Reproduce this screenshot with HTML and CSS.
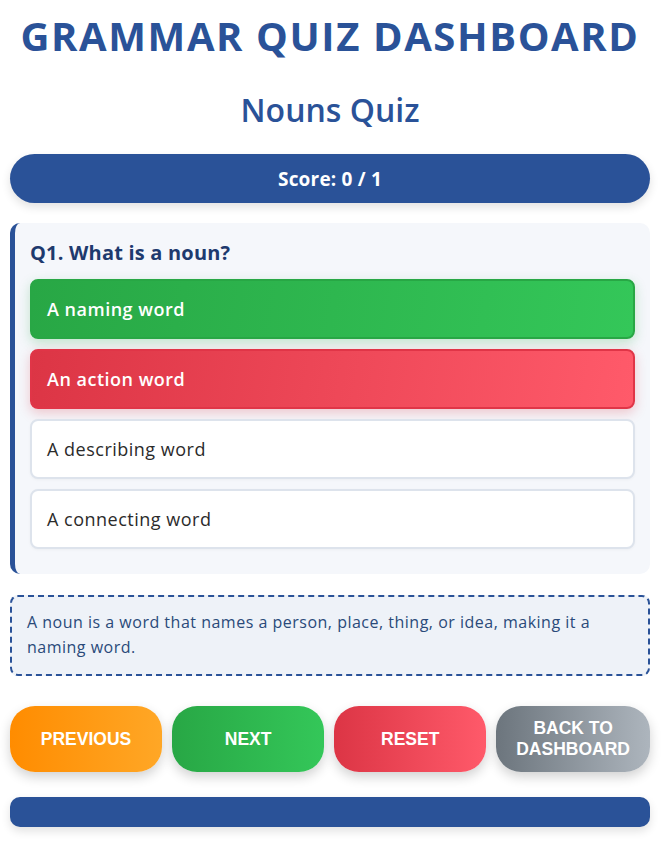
FILE: index.html
```html
<!DOCTYPE html>
<html lang="en">
<head>
<meta charset="utf-8">
<title>Grammar Quiz Dashboard</title>
<link rel="stylesheet" href="styles.css">
</head>
<body>
<div class="container">
  <h1 class="title">GRAMMAR QUIZ DASHBOARD</h1>
  <h2 class="quiz-name">Nouns Quiz</h2>
  <div class="score">Score: 0 / 1</div>
  <div class="question-card">
    <h3 class="question">Q1. What is a noun?</h3>
    <div class="option correct">A naming word</div>
    <div class="option wrong">An action word</div>
    <div class="option">A describing word</div>
    <div class="option">A connecting word</div>
  </div>
  <div class="explanation">A noun is a word that names a person, place, thing, or idea, making it a naming word.</div>
  <div class="nav">
    <button class="btn btn-prev">PREVIOUS</button>
    <button class="btn btn-next">NEXT</button>
    <button class="btn btn-reset">RESET</button>
    <button class="btn btn-back">BACK TO DASHBOARD</button>
  </div>
  <div class="footer-bar"></div>
</div>
</body>
</html>
```
FILE: styles.css
```css
* { box-sizing: border-box; }
body {
  margin: 0;
  background: #ffffff;
  font-family: "Open Sans", "Noto Sans", sans-serif;
}
.container {
  width: 640px;
  margin: 0 0 0 10px;
  padding: 12px 0 20px;
}
.title {
  margin: 0;
  text-align: center;
  font-size: 40px;
  line-height: 48px;
  font-weight: 700;
  letter-spacing: 1.6px;
  color: #2a5298;
}
.quiz-name {
  margin: 30px 0 24px;
  text-align: center;
  font-size: 32px;
  line-height: 40px;
  font-weight: 600;
  color: #2a5298;
}
.score {
  height: 49px;
  border-radius: 25px;
  background: #2a5298;
  color: #fff;
  font-weight: 700;
  font-size: 19px;
  letter-spacing: 0.2px;
  display: flex;
  align-items: center;
  justify-content: center;
  box-shadow: 0 4px 10px rgba(0, 0, 0, 0.12);
}
.question-card {
  margin-top: 20px;
  background: #f5f7fb;
  border-left: 5px solid #2a5298;
  border-radius: 10px;
  padding: 15px;
}
.question {
  margin: 0 0 11px;
  font-size: 20px;
  line-height: 30px;
  font-weight: 700;
  letter-spacing: 0.2px;
  color: #1e3a6e;
}
.option {
  height: 60px;
  margin-bottom: 10px;
  border: 2px solid #dde3ec;
  border-radius: 8px;
  background: #ffffff;
  padding: 0 15px;
  display: flex;
  align-items: center;
  font-size: 18px;
  letter-spacing: 0.5px;
  font-weight: 500;
  color: #2b2b2b;
  box-shadow: 0 1px 3px rgba(0, 0, 0, 0.04);
}
.option.correct {
  background: linear-gradient(100deg, #28a745, #34c759);
  border-color: #28a745;
  color: #fff;
  font-weight: 600;
  box-shadow: 0 4px 12px rgba(40, 167, 69, 0.25);
}
.option.wrong {
  background: linear-gradient(100deg, #dc3545, #ff5a6a);
  border-color: #e03547;
  color: #fff;
  font-weight: 600;
  box-shadow: 0 4px 12px rgba(220, 53, 69, 0.25);
}
.explanation {
  margin-top: 21px;
  border: 2px dashed #2a5298;
  border-radius: 8px;
  background: #eef2f8;
  padding: 13px 15px 14px;
  font-size: 16px;
  letter-spacing: 0.5px;
  line-height: 25px;
  color: #2a4a7a;
}
.nav {
  margin-top: 30px;
  display: flex;
  gap: 10px;
}
.btn {
  flex: 1 1 0;
  height: 66px;
  border: none;
  border-radius: 25px;
  color: #fff;
  font-family: "Liberation Sans", Arial, sans-serif;
  font-weight: 700;
  font-size: 17.5px;
  line-height: 21px;
  padding: 0 20px;
  box-shadow: 0 5px 12px rgba(0, 0, 0, 0.18);
}
.btn-prev { background: linear-gradient(90deg, #ff8c00, #ffa726); }
.btn-next { background: linear-gradient(90deg, #28a745, #34c759); }
.btn-reset { background: linear-gradient(90deg, #dc3545, #ff5a6a); }
.btn-back { background: linear-gradient(90deg, #6c757d, #adb5bd); }
.footer-bar {
  margin-top: 25px;
  height: 30px;
  border-radius: 10px;
  background: #2a5298;
  box-shadow: 0 4px 10px rgba(0, 0, 0, 0.12);
}
```
